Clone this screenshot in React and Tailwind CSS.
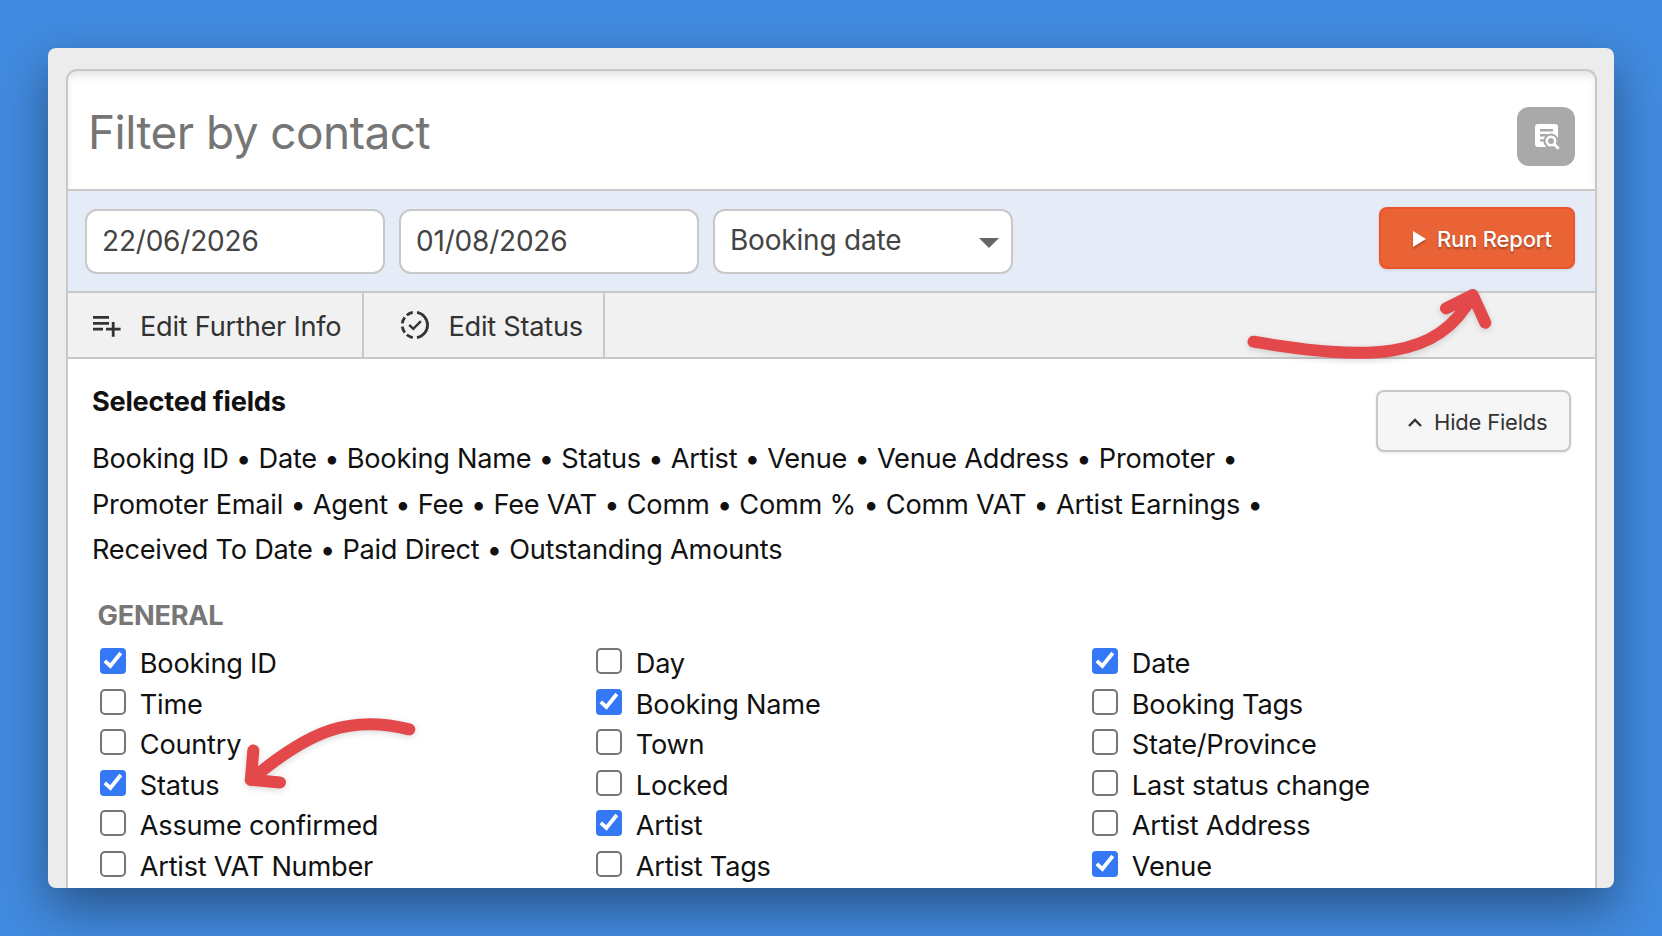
import React from 'react'

const selectedLines = [
  'Booking ID • Date • Booking Name • Status • Artist • Venue • Venue Address • Promoter •',
  'Promoter Email • Agent • Fee • Fee VAT • Comm • Comm % • Comm VAT • Artist Earnings •',
  'Received To Date • Paid Direct • Outstanding Amounts',
]

const generalFields = [
  { label: 'Booking ID', checked: true }, { label: 'Day' }, { label: 'Date', checked: true },
  { label: 'Time' }, { label: 'Booking Name', checked: true }, { label: 'Booking Tags' },
  { label: 'Country' }, { label: 'Town' }, { label: 'State/Province' },
  { label: 'Status', checked: true }, { label: 'Locked' }, { label: 'Last status change' },
  { label: 'Assume confirmed' }, { label: 'Artist', checked: true }, { label: 'Artist Address' },
  { label: 'Artist VAT Number' }, { label: 'Artist Tags' }, { label: 'Venue', checked: true },
]

const Checkbox = ({ checked }) => (
  checked ? (
    <span className="h-[26px] w-[26px] shrink-0 rounded-[4px] bg-[#3478f6]">
      <svg viewBox="0 0 26 26" className="h-full w-full" fill="none" stroke="white" strokeWidth="3.8">
        <path d="M4.8 12.8l5.6 5.2L20.8 5" />
      </svg>
    </span>
  ) : (
    <span className="h-[26px] w-[26px] shrink-0 rounded-[5px] border-2 border-[#767676] bg-white" />
  )
)

const ListAddIcon = () => (
  <svg viewBox="0 0 30 24" className="h-6 w-[30px]" fill="none" stroke="#333" strokeWidth="2.8">
    <path d="M1 4.4h16M1 10.4h16M1 16.2h10M14 16.2h14.6M21.2 9v14.8" />
  </svg>
)

const StatusIcon = () => (
  <svg viewBox="0 0 30 30" className="h-[30px] w-[30px]" fill="none" stroke="#333" strokeWidth="2.8">
    <path d="M17 2.4a12.8 12.8 0 0 1 0 25.2" />
    <path d="M12.8 2.4A12.8 12.8 0 0 0 6.8 5.2M4.8 7.3A12.8 12.8 0 0 0 2.3 13.4M2.3 16.6A12.8 12.8 0 0 0 4.8 22.7M6.8 24.8A12.8 12.8 0 0 0 12.8 27.6" />
    <path d="M9.2 14.8l4.1 4.1 7.6-7.8" strokeWidth="2.4" />
  </svg>
)

const Arrows = () => (
  <svg viewBox="0 0 1662 936" className="pointer-events-none absolute inset-0 h-[936px] w-[1662px] drop-shadow-[0_2px_3px_rgba(0,0,0,0.15)]" fill="none" stroke="#e3484a" strokeWidth="12" strokeLinecap="round" strokeLinejoin="round">
    <path d="M1253.5 341.7C1368 361 1438 361 1472.7 295M1446 308.3L1472.7 295L1485.3 322.7" />
    <path d="M409.3 729.3C350 715 310 730 250.7 780M253.3 750.5L250.9 779.8L280 782.4" />
  </svg>
)

const App = () => {
  return (
    <div className="relative h-[936px] w-[1662px] overflow-hidden bg-[#428be0] p-12 font-['Inter',sans-serif] text-[27.2px] tracking-[-0.25px] text-[#111]">
      <div className="h-[840px] overflow-hidden rounded-lg bg-[#ececec] px-[18px] pt-[21px] shadow-[0_20px_50px_rgba(0,0,0,0.4)]">
        <div className="h-[819px] w-[1531px] overflow-hidden rounded-t-[11px] border-2 border-b-0 border-[#c8c8c8] bg-white">
          <div className="flex h-[120px] items-center justify-between border-b-2 border-[#c8c8c8] pl-5 pr-5 shadow-[inset_0_6px_8px_-2px_rgba(0,0,0,0.12)]">
            <span className="pt-[5px] text-[46px] tracking-[-0.55px] text-[#757575]">Filter by contact</span>
            <button className="mt-[13px] flex h-[59px] w-[58px] items-center justify-center rounded-xl bg-[#a9a9a9]">
              <svg viewBox="0 0 26 26" className="ml-0.5 h-[26px] w-[26px]">
                <rect x="1" y="0" width="23" height="23" rx="3" fill="white" />
                <path d="M6 6.2h13M6 11.3h7M6 16.4h4" stroke="#a9a9a9" strokeWidth="2.4" />
                <circle cx="17" cy="17" r="7.6" fill="#a9a9a9" />
                <path d="M20.5 20.5l4.4 4.4" stroke="#a9a9a9" strokeWidth="6" />
                <circle cx="17" cy="17" r="4.2" fill="none" stroke="white" strokeWidth="2.6" />
                <path d="M20 20l4.6 4.8" stroke="white" strokeWidth="2.8" />
              </svg>
            </button>
          </div>

          <div className="flex h-[102px] items-start justify-between border-b-2 border-[#c8c8c8] bg-[#e5ebf7] pl-[17px] pr-5 text-[28px] tracking-[-0.2px]">
            <div className="mt-[18px] flex gap-[14px] text-[#444]">
              <div className="flex h-[65px] w-[300px] items-center rounded-xl border-2 border-[#c8c8c8] bg-white px-[15px] pb-px">22/06/2026</div>
              <div className="flex h-[65px] w-[300px] items-center rounded-xl border-2 border-[#c8c8c8] bg-white px-[15px] pb-px">01/08/2026</div>
              <div className="flex h-[65px] w-[300px] items-center justify-between rounded-xl border-2 border-[#c8c8c8] bg-white pl-[15px] pr-3">
                <span className="pb-[3px]">Booking date</span>
                <svg viewBox="0 0 20 10" className="mt-0.5 h-2.5 w-5" fill="#666"><path d="M0 0h20L10 10z" /></svg>
              </div>
            </div>
            <button className="mt-4 flex h-[62px] w-[196px] items-center rounded-lg border-2 border-[#e9542b] bg-[#e96336] pl-8 pt-0.5 text-[22px] font-medium text-white shadow-[0_1px_3px_rgba(0,0,0,0.12)] text-shadow-[0_2px_2px_rgba(0,0,0,0.3)]">
              <svg viewBox="0 0 13 16" className="mr-[11px] h-4 w-[13px] drop-shadow-[0_2px_1px_rgba(0,0,0,0.25)]" fill="white"><path d="M0 0l13 8L0 16z" /></svg>
              Run Report
            </button>
          </div>

          <div className="flex h-[66px] border-b-2 border-[#c8c8c8] bg-[#f1f1f1] text-[#333]">
            <div className="flex w-[296px] items-center border-r-2 border-[#c8c8c8] pl-6">
              <ListAddIcon />
              <span className="ml-[18px] pt-[5px]">Edit Further Info</span>
            </div>
            <div className="flex w-[241px] items-center border-r-2 border-[#c8c8c8] pl-[35.5px]">
              <StatusIcon />
              <span className="ml-[19px] pt-[5px]">Edit Status</span>
            </div>
          </div>

          <div className="flex justify-between pl-6 pr-6 pt-[26px]">
            <div>
              <h2 className="font-bold leading-[34px]">Selected fields</h2>
              <div className="mt-[17px]">
                {selectedLines.map((line) => (
                  <p key={line} className="whitespace-nowrap leading-[45.5px]">{line}</p>
                ))}
              </div>
            </div>
            <button className="mt-[5px] flex h-[62px] w-[195px] items-center rounded-lg border-2 border-[#c8c8c8] bg-[#f6f6f6] pl-[30px] pt-0.5 text-[22px] tracking-[-0.2px] text-[#333] shadow-[0_1px_3px_rgba(0,0,0,0.1)]">
              <svg viewBox="0 0 14 9" className="mr-[12px] h-[9px] w-[14px]" fill="none" stroke="#333" strokeWidth="2.4"><path d="M1 8l6-6 6 6" /></svg>
              Hide Fields
            </button>
          </div>

          <h3 className="mt-[25px] pl-[29.5px] font-bold leading-9 text-[#777]">GENERAL</h3>
          <div className="mt-[14.7px] grid grid-cols-[496px_496px_496px] pl-8">
            {generalFields.map((field) => (
              <label key={field.label} className="flex h-[40.5px] items-start leading-8">
                <Checkbox checked={field.checked} />
                <span className="ml-[13.8px]">{field.label}</span>
              </label>
            ))}
          </div>
        </div>
      </div>
      <Arrows />
    </div>
  )
}

export default App
